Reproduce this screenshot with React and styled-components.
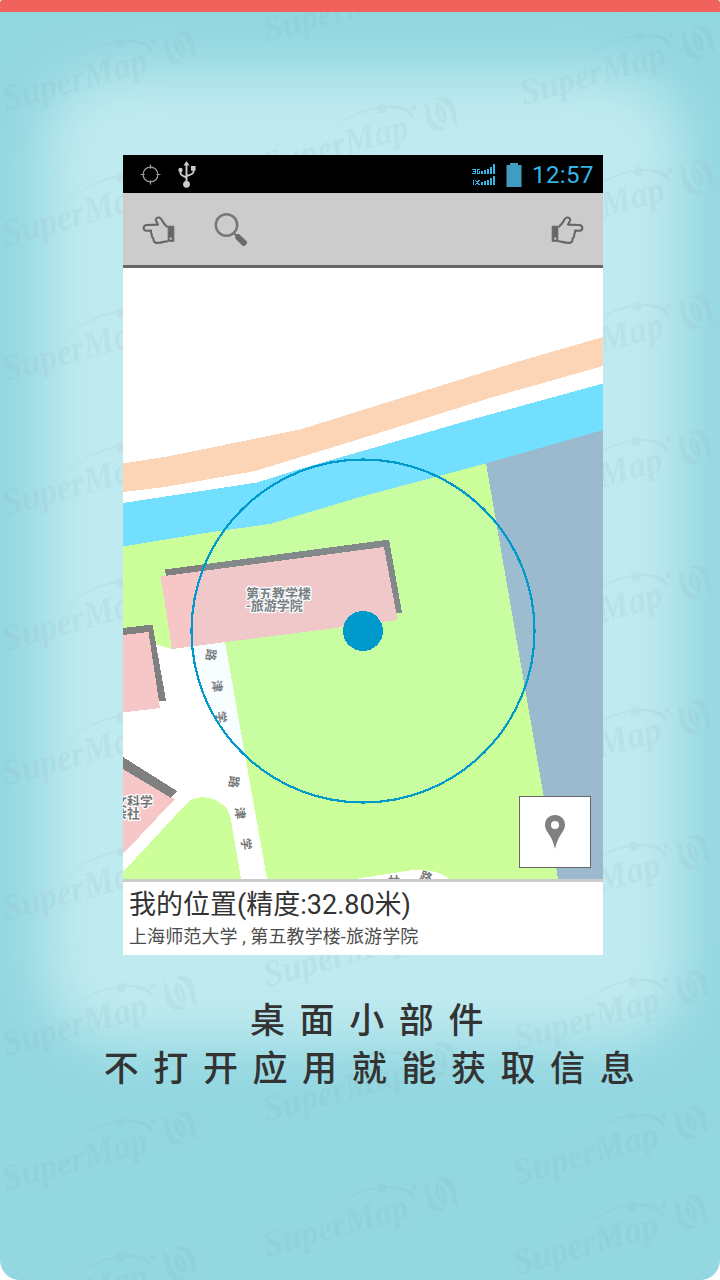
import React from "react";
import styled, { createGlobalStyle } from "styled-components";

const GlobalStyle = createGlobalStyle`
  * { box-sizing: border-box; }
  html, body { margin: 0; padding: 0; background: #fff; }
`;

const sans = `Roboto, "Noto Sans CJK SC", sans-serif`;

const Page = styled.main`
  position: relative;
  width: 720px;
  height: 1280px;
  overflow: hidden;
  border-radius: 3px 3px 20px 20px;
  background: #93d7e1;
  display: flex;
  flex-direction: column;
  align-items: center;
`;

const TopStripe = styled.div`
  position: relative;
  z-index: 2;
  align-self: stretch;
  height: 12px;
  background: #f2625c;
`;

const WatermarkLayer = styled.svg`
  position: absolute;
  z-index: 1;
  inset: 0;
  pointer-events: none;
`;

const Phone = styled.section`
  position: relative;
  width: 480px;
  height: 800px;
  margin: 143px 0 0 6px;
  display: flex;
  flex-direction: column;

  &::before {
    content: "";
    position: absolute;
    inset: -82px -80px -88px;
    border-radius: 72px;
    background: #bfeaef;
    filter: blur(27px);
  }
`;

const PhoneFace = styled.div`
  position: relative;
  z-index: 2;
  display: flex;
  flex-direction: column;
  height: 100%;
`;

const StatusBar = styled.header`
  height: 38px;
  padding: 1px 9px 0 17px;
  background: #000;
  display: flex;
  align-items: center;
  justify-content: space-between;
`;

const StatusGroup = styled.div`
  display: flex;
  align-items: center;
  gap: ${(p) => p.$gap}px;
`;

const Clock = styled.span`
  width: 62px;
  font: 400 24px/38px ${sans};
  letter-spacing: 0.4px;
  color: #33b5e5;
  white-space: nowrap;
`;

const Toolbar = styled.nav`
  height: 75px;
  padding: 2px 19px 0;
  background: #ccc;
  border-bottom: 3px solid #666;
  display: flex;
  align-items: center;
  justify-content: space-between;
`;

const ToolGroup = styled.div`
  display: flex;
  align-items: center;
  gap: 39px;
`;

const ToolButton = styled.button`
  padding: 0;
  border: 0;
  background: none;
  display: flex;
`;

const MapArea = styled.div`
  position: relative;
  height: 611px;
  overflow: hidden;
`;

const MapCanvas = styled.svg`
  display: block;
`;

const LocateButton = styled.button`
  position: absolute;
  right: 12px;
  bottom: 11px;
  width: 72px;
  height: 72px;
  padding: 0;
  border: 1px solid #666;
  background: #fff;
  display: flex;
  align-items: center;
  justify-content: center;
`;

const InfoPanel = styled.footer`
  flex: 1;
  border-top: 3px solid #ccc;
  padding: 3px 6px 0;
  background: #fff;
`;

const InfoTitle = styled.div`
  font: 400 27px/41px ${sans};
  color: #333;
  white-space: nowrap;
`;

const InfoDetail = styled.div`
  font: 400 18px/21px ${sans};
  letter-spacing: 0.1px;
  color: #4c4c4c;
  white-space: nowrap;
`;

const Caption = styled.div`
  position: relative;
  z-index: 2;
  margin-top: 39px;
  align-self: stretch;
  display: flex;
  flex-direction: column;
  align-items: center;
  padding-left: 28px;
`;

const CaptionLine = styled.p`
  margin: 0;
  padding-left: ${(p) => p.$shift || 0}px;
  font: 500 35px/48px "Noto Sans CJK SC", sans-serif;
  letter-spacing: 14.6px;
  color: #333;
  white-space: nowrap;
`;

const watermarks = [
  [0, 0], [0, 135], [0, 270], [0, 405], [0, 540], [0, 675], [0, 810], [0, 945], [0, 1080], [0, 1215],
  [261, -69], [261, 66], [261, 876], [261, 1011], [261, 1146],
  [518, -6], [517, 129], [516, 264], [515, 399], [515, 534], [514, 669], [513, 804],
  [512, 939], [511, 1074], [511, 1164],
];

function Watermarks() {
  return (
    <WatermarkLayer width="720" height="1280" viewBox="0 0 720 1280">
      {watermarks.map(([x, y]) => (
        <g key={`${x}-${y}`} transform={`translate(${x} ${y})`} fill="#8aa7b0" opacity="0.11">
          <text
            transform="translate(6 111) rotate(-15.5)"
            fontFamily="Liberation Serif, serif"
            fontStyle="italic"
            fontWeight="700"
            fontSize="37"
            textLength="149"
            lengthAdjust="spacingAndGlyphs"
          >
            SuperMap
          </text>
          <path d="M61 71Q88 45 121 40Q154 38 153 54Q145 41 121 42Q88 47 61 71Z" />
          <circle cx="121" cy="42.500" r="4.800" />
          <circle cx="153" cy="41.500" r="2.500" />
          <path d="M163 36L168 40C170 52 173 61 186 62C178 68 169 66 166 54Z" />
          <path d="M197 60L192 56C190 44 187 35 174 34C182 28 191 30 194 42Z" />
          <path d="M178 36C171 39 174 56 183 57C179 51 177 44 178 36Z" />
          <path d="M182 60C189 57 186 40 177 39C181 45 183 52 182 60Z" />
        </g>
      ))}
    </WatermarkLayer>
  );
}

function TargetIcon() {
  return (
    <svg width="21" height="21" viewBox="0 0 22 22" fill="none" stroke="#999" strokeWidth="1.3">
      <circle cx="11" cy="11" r="7.800" />
      <path d="M11 0.500V5M11 17V21.500M0.500 11H5M17 11H21.500" />
    </svg>
  );
}

function UsbIcon() {
  return (
    <svg width="18" height="27" viewBox="0 0 18 27" fill="none" stroke="#ccc" strokeWidth="1.900">
      <path d="M8.500 22V3M2.500 10V12.500Q2.500 14 8.500 16.500M15.500 7V11Q15.500 13 8.500 15" />
      <path d="M8.500 0L11.500 4.500H5.500Z" fill="#ccc" stroke="none" />
      <circle cx="8.500" cy="23.300" r="3.400" fill="#ccc" stroke="none" />
      <circle cx="2.500" cy="9" r="2.200" fill="#ccc" stroke="none" />
      <rect x="13" y="5" width="4.600" height="4.600" fill="#ccc" stroke="none" />
    </svg>
  );
}

const signalRows = [
  { base: 10, heights: [3, 4, 5, 7, 10] },
  { base: 21, heights: [3, 4, 5, 7, 9] },
];

function SignalIcon() {
  return (
    <svg width="24" height="22" viewBox="0 0 24 22" fill="#33b5e5" shapeRendering="crispEdges">
      {signalRows.map(({ base, heights }) =>
        heights.map((height, i) => (
          <rect key={`${base}-${i}`} x={9 + i * 3} y={base - height} width="2" height={height} />
        ))
      )}
      <g fill="none" stroke="#33b5e5" strokeWidth="1">
        <path d="M0 5.500H3M1 7.500H3M0 9.500H3M3.500 5V10M8 5.500H5M5.500 5V10M5 9.500H8M7.500 7V10" />
        <path d="M1.500 16V21M3 16L7.500 21M7.500 16L3 21" />
      </g>
    </svg>
  );
}

function BatteryIcon() {
  return (
    <svg width="16" height="24" viewBox="0 0 16 24" fill="#419cc1">
      <path d="M4 0H12V2H15.500V24H0.500V2H4Z" />
    </svg>
  );
}

function HandIcon({ flip }) {
  return (
    <svg width="33" height="29" viewBox="0 0 33 29">
      <g
        transform={flip ? "translate(33 0) scale(-1 1)" : undefined}
        fill="none"
        stroke="#666"
        strokeWidth="2.100"
        strokeLinejoin="round"
      >
        <path d="M25.500 11.200L22 7.500C20 5.300 19.800 2 17.200 1.500C15.200 1.200 13 2.600 14 4.800L16 8.600L5 9C1 9.200 0.300 14.500 4.500 14.700L9 14.600C8 17.500 10.500 18 9.800 19.400C9.300 21.300 12 22 11.500 23.800C11.500 26.500 14 27.200 17 26.800C20 26.500 22 25.400 26 25.200" />
        <path d="M26.200 10.200H31.800V25.300H26.200Z" fill="#666" strokeWidth="1" />
        <circle cx="28.800" cy="22.600" r="1.200" fill="#ccc" stroke="none" />
      </g>
    </svg>
  );
}

function SearchIcon() {
  return (
    <svg width="34" height="36" viewBox="0 -2 34 36">
      <circle cx="12.500" cy="11" r="10.700" fill="none" stroke="#777" strokeWidth="2.500" />
      <path d="M19.500 18.800L22.500 22" stroke="#777" strokeWidth="2.200" />
      <path d="M22.300 20L25 20L32.800 27.600L33 29.500L30.700 32L28.500 31.800L21.300 24.500V22Z" fill="#6b6b6b" />
    </svg>
  );
}

function PinIcon() {
  return (
    <svg width="20" height="34" viewBox="0 0 20 34">
      <path
        d="M10 0C4.200 0 0 4.300 0 9.800C0 14.500 3 17.500 5.500 21.800C7.500 25.300 9 29.500 10 34C11 29.500 12.500 25.300 14.500 21.800C17 17.500 20 14.500 20 9.800C20 4.300 15.800 0 10 0ZM10 6A4 4 0 0 1 10 14A4 4 0 0 1 10 6Z"
        fill="#808080"
        fillRule="evenodd"
      />
    </svg>
  );
}

const roadLabels = [
  ["路", 211, 655, 96], ["津", 217, 686, 82], ["学", 221, 717, 82],
  ["路", 234, 782, 96], ["津", 240, 813, 82], ["学", 246, 844, 82],
  ["路", 426, 877, 20], ["林", 394, 882, 0],
];

function CampusMap() {
  return (
    <MapCanvas width="480" height="611" viewBox="123 268 480 611" shapeRendering="crispEdges">
      <rect x="123" y="268" width="480" height="611" fill="#fff" />
      <path d="M123 463.500L170 456L300 429.500L430 389L520 361L603 337V366L490 398L350 442L255 471L165 487L123 492Z" fill="#fcd5b7" />
      <path d="M123 503L257 482.500L300 469L470 420L603 383.500V430L486 463.500L360 497L270 524L205 533L123 546.500Z" fill="#73dfff" />
      <path d="M486 463.500L603 430V879H558Z" fill="#9cbacd" />
      <path d="M123 546.500L205 533L270 524L360 497L486 463.500L558 879H267L225 642L172 649L157 644.500L123 650Z" fill="#ccff99" />
      <path d="M123 872L187 803C194 796 211 794 223 805C229 810 230 814 231 820L241 879H123Z" fill="#ccff99" />
      <path d="M355 879L400 872C420 868 440 870 449 879Z" fill="#fff" />
      <path d="M165 569.500L389 539.500L402 612.500H396L384 547L166 576.500Z" fill="#808080" />
      <path d="M160.500 576.500L384 547L397.500 620L172 649Z" fill="#f7c6c6" />
      <path d="M123 628L152.500 624.500L166 700.500H158L148 633L123 636Z" fill="#808080" />
      <path d="M123 635L148.500 632L160 708L123 712.500Z" fill="#f7c6c6" />
      <path d="M123 768L170 797L175 799L123 854Z" fill="#f7c6c6" />
      <path d="M123 757L177 791L171 798L123 769Z" fill="#808080" />
      <g shapeRendering="auto" fontFamily="Noto Sans CJK SC, sans-serif" fontWeight="700" fill="#777">
        <g fontSize="13" stroke="#fff" strokeWidth="2.500" paintOrder="stroke" strokeLinejoin="round">
          <text x="246" y="598">第五教学楼</text>
          <text x="246" y="610">-旅游学院</text>
          <text x="114" y="806">文科学</text>
          <text x="114" y="818">杂社</text>
        </g>
        {roadLabels.map(([char, x, y, angle]) => (
          <text key={`${char}-${y}`} transform={`translate(${x} ${y}) rotate(${angle})`} textAnchor="middle" dy="4.300" fontSize="12">
            {char}
          </text>
        ))}
      </g>
      <circle cx="363" cy="631" r="171.500" fill="#a0e6ff" fillOpacity="0.08" />
      <circle cx="363" cy="631" r="171.500" fill="none" stroke="#0099cc" strokeWidth="2.200" />
      <circle cx="363" cy="631" r="20" fill="#0099cc" />
    </MapCanvas>
  );
}

export default function App() {
  return (
    <>
      <GlobalStyle />
      <Page>
        <TopStripe />
        <Phone>
          <PhoneFace>
            <StatusBar>
              <StatusGroup $gap={17}>
                <TargetIcon />
                <UsbIcon />
              </StatusGroup>
              <StatusGroup $gap={10}>
                <SignalIcon />
                <BatteryIcon />
                <Clock>12:57</Clock>
              </StatusGroup>
            </StatusBar>
            <Toolbar>
              <ToolGroup>
                <ToolButton aria-label="Previous"><HandIcon /></ToolButton>
                <ToolButton aria-label="Search"><SearchIcon /></ToolButton>
              </ToolGroup>
              <ToolButton aria-label="Next"><HandIcon flip /></ToolButton>
            </Toolbar>
            <MapArea>
              <CampusMap />
              <LocateButton aria-label="Locate"><PinIcon /></LocateButton>
            </MapArea>
            <InfoPanel>
              <InfoTitle>我的位置(精度:32.80米)</InfoTitle>
              <InfoDetail>上海师范大学 , 第五教学楼-旅游学院</InfoDetail>
            </InfoPanel>
          </PhoneFace>
        </Phone>
        <Caption>
          <CaptionLine>桌面小部件</CaptionLine>
          <CaptionLine $shift={5}>不打开应用就能获取信息</CaptionLine>
        </Caption>
        <Watermarks />
      </Page>
    </>
  );
}
